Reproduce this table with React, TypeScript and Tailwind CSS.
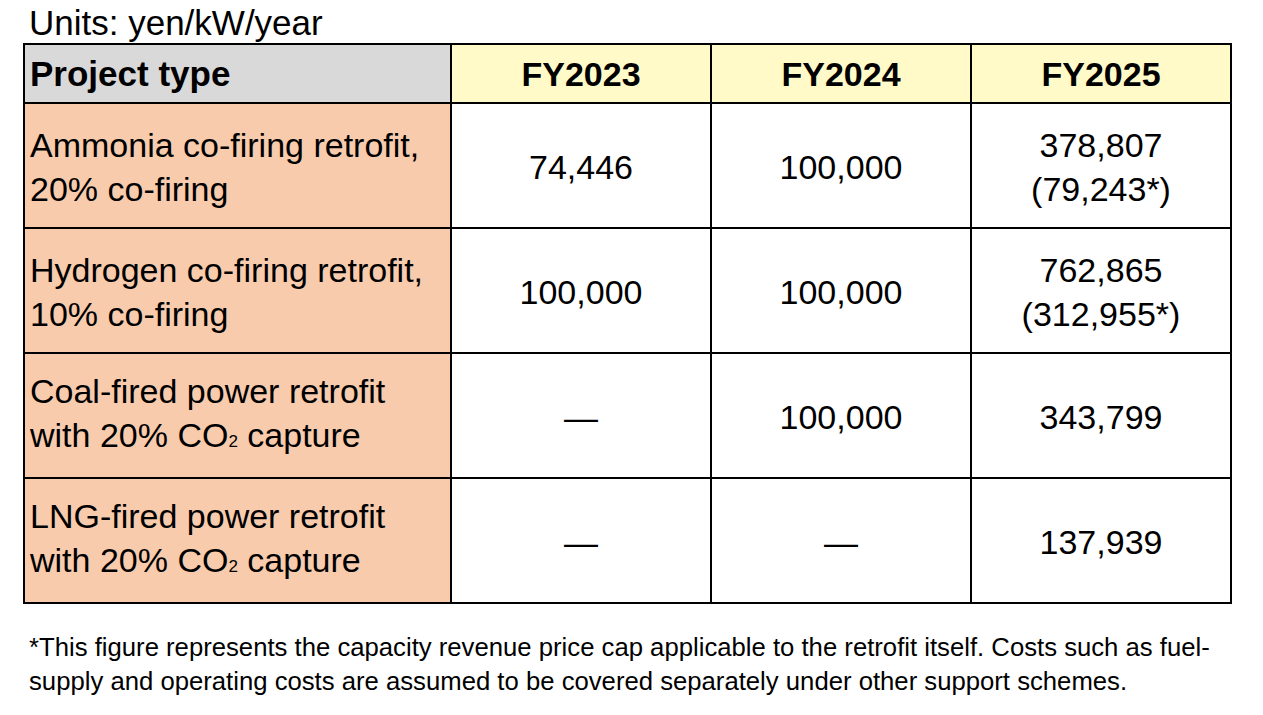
import React from "react";

const font = { fontFamily: '"Liberation Sans", Arial, sans-serif' };

function Sub2() {
  return <span className="text-[17px]">2</span>;
}

const rows: { label: React.ReactNode; a: React.ReactNode; b: React.ReactNode; c: React.ReactNode }[] = [
  {
    label: (
      <>
        Ammonia co-firing retrofit,
        <br />
        20% co-firing
      </>
    ),
    a: "74,446",
    b: "100,000",
    c: (
      <>
        378,807
        <br />
        (79,243*)
      </>
    ),
  },
  {
    label: (
      <>
        Hydrogen co-firing retrofit,
        <br />
        10% co-firing
      </>
    ),
    a: "100,000",
    b: "100,000",
    c: (
      <>
        762,865
        <br />
        (312,955*)
      </>
    ),
  },
  {
    label: (
      <>
        Coal-fired power retrofit
        <br />
        with 20% CO<Sub2 /> capture
      </>
    ),
    a: "—",
    b: "100,000",
    c: "343,799",
  },
  {
    label: (
      <>
        LNG-fired power retrofit
        <br />
        with 20% CO<Sub2 /> capture
      </>
    ),
    a: "—",
    b: "—",
    c: "137,939",
  },
];

export default function App() {
  return (
    <div className="w-[1263px] h-[715px] bg-white text-black overflow-hidden" style={font}>
      <div className="pl-[29px] pt-[2px] text-[35px] leading-[41px] whitespace-nowrap">Units: yen/kW/year</div>
      <div className="ml-[23px] w-fit bg-black p-[2px] grid grid-cols-[425px_258px_258px_258px] grid-rows-[57px_123px_123px_123px_123px] gap-[2px] text-[34px] leading-[44px]">
        <div className="bg-[#d9d9d9] flex items-center pl-[5px] pt-[1px] font-bold text-[35px]">Project type</div>
        <div className="bg-[#fffac8] flex items-center justify-center pt-[1px] font-bold">FY2023</div>
        <div className="bg-[#fffac8] flex items-center justify-center pt-[1px] font-bold">FY2024</div>
        <div className="bg-[#fffac8] flex items-center justify-center pt-[1px] font-bold">FY2025</div>
        {rows.map((r, i) => (
          <React.Fragment key={i}>
            <div className="bg-[#f8cbad] flex items-center pl-[5px] pt-[2px] whitespace-nowrap">
              <div>{r.label}</div>
            </div>
            <div className="bg-white flex items-center justify-center text-center pt-[2px]">
              <div>{r.a}</div>
            </div>
            <div className="bg-white flex items-center justify-center text-center pt-[2px]">
              <div>{r.b}</div>
            </div>
            <div className="bg-white flex items-center justify-center text-center pt-[2px]">
              <div>{r.c}</div>
            </div>
          </React.Fragment>
        ))}
      </div>
      <div className="mt-[26px] pl-[29px] text-[25.7px] leading-[34px] whitespace-nowrap">
        <div>*This figure represents the capacity revenue price cap applicable to the retrofit itself. Costs such as fuel-</div>
        <div>supply and operating costs are assumed to be covered separately under other support schemes.</div>
      </div>
    </div>
  );
}
